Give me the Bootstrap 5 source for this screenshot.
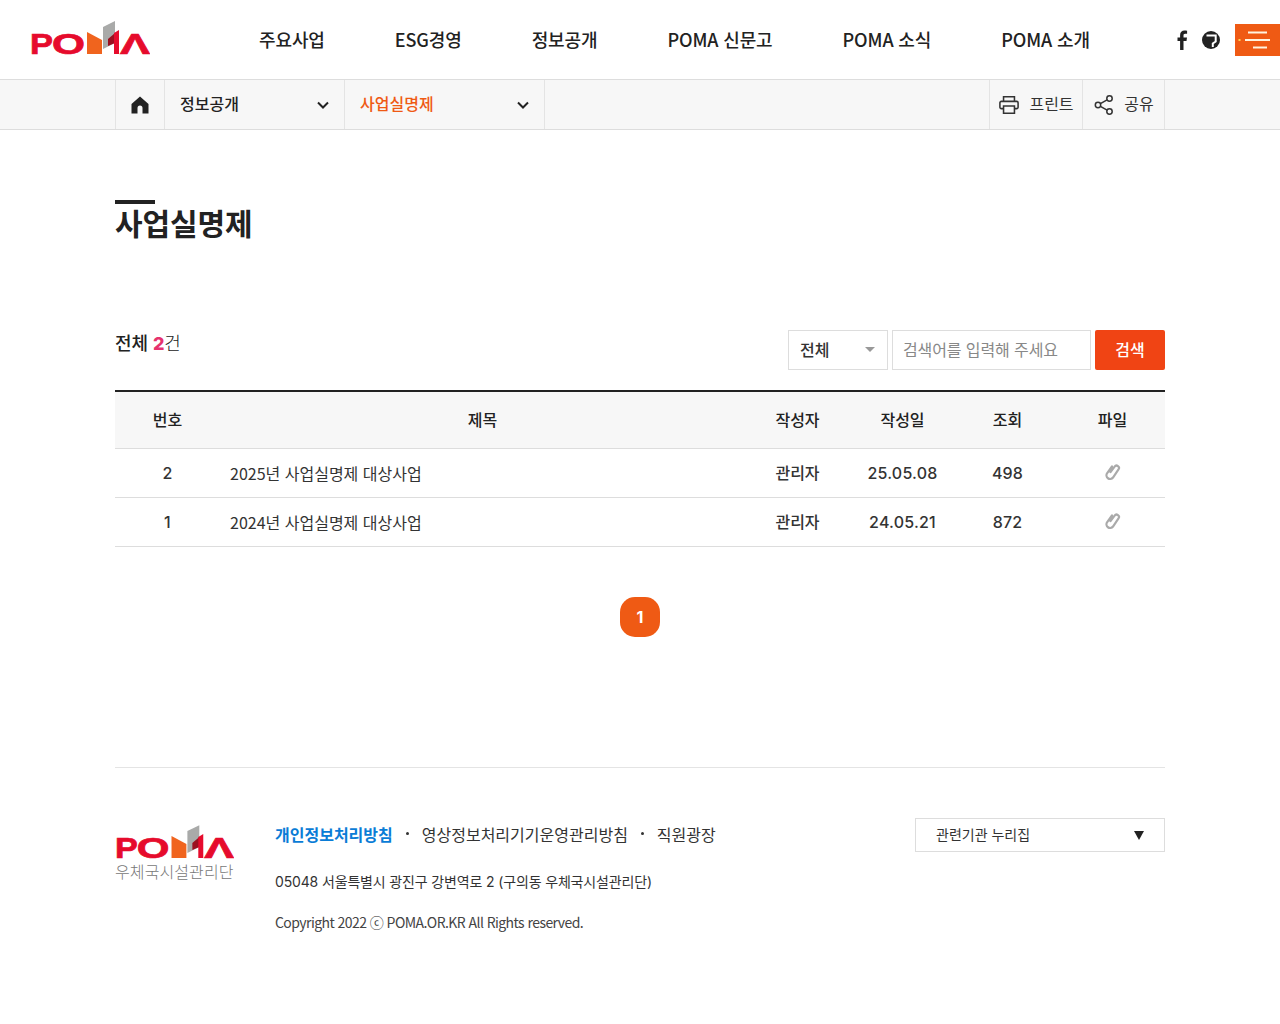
<!DOCTYPE html>
<html lang="ko">
<head>
    <meta charset="UTF-8">
    <meta name="viewport" content="width=device-width, initial-scale=1.0">
    <title>사업실명제</title>
    <link rel="stylesheet" href="https://cdn.jsdelivr.net/npm/bootstrap@5.3.0/dist/css/bootstrap.min.css">
    <style>
        body {
            font-family: "Noto Sans CJK KR", "Noto Sans", sans-serif;
            color: #222;
            background: #fff;
        }

        .wrap-1050 { width: 1050px; margin: 0 auto; }

        /* header */
        .site-head { height: 80px; border-bottom: 1px solid #ddd; padding-left: 30px; }
        .logo-top { width: 120px; height: 40px; margin-top: 3px; }
        .logo-top text, .foot-logo text { font-family: "Liberation Sans", sans-serif; font-weight: 700; }
        .gnb { margin-left: 109px; gap: 70px; font-size: 18px; font-weight: 500; letter-spacing: -0.12px; }
        .gnb a { color: #222; text-decoration: none; }
        .head-icons { margin-left: auto; gap: 11px; }
        .menu-btn { width: 45px; height: 32px; background: #ef5a14; margin-left: 4px; }

        /* location bar */
        .loc-bar { height: 50px; background: #f7f7f7; border-bottom: 1px solid #ddd; }
        .loc-cell { height: 49px; border-right: 1px solid #e4e4e4; font-size: 16px; font-weight: 500; }
        .loc-cell span { margin-top: -3px; }
        .loc-home { width: 50px; border-left: 1px solid #e4e4e4; }
        .loc-sel { padding: 0 14px 0 15px; justify-content: space-between; }
        .loc-one { width: 180px; }
        .loc-two { width: 200px; color: #ef5a14; }
        .loc-tool { gap: 10px; font-weight: 400; color: #333; }
        .loc-print { width: 94px; border-left: 1px solid #e4e4e4; justify-content: center; padding-left: 1px; }
        .loc-share { width: 82px; justify-content: center; padding-left: 1px; }

        /* title */
        .page-title { margin-top: 70px; height: 130px; }
        .title-bar { width: 40px; height: 4px; background: #222; }
        .page-title h2 { font-size: 30px; font-weight: 700; line-height: 36px; margin: 0; color: #222; letter-spacing: -0.1px; }

        /* board top */
        .board-top { height: 60px; }
        .count-txt { font-size: 18px; font-weight: 500; line-height: 26px; margin-top: -1px; letter-spacing: -0.1px; }
        .count-txt b { color: #e6326e; font-weight: 800; font-family: Inter, sans-serif; }
        .count-txt span { font-weight: 300; }
        .sch-select { width: 100px; height: 40px; border-radius: 0; border: 1px solid #ddd; font-size: 16px; font-weight: 500; color: #333; padding: 0 11px 2px; display: flex; align-items: center; justify-content: space-between; }
        .tri-gray { width: 0; height: 0; border: 5px solid transparent; border-top: 5px solid #999; border-bottom: 0; margin-right: 1px; }
        .sch-input.form-control { width: 199px; height: 40px; margin-left: 4px; border-radius: 0; border: 1px solid #ddd; font-size: 16px; padding: 0 10px 2px; font-family: inherit; letter-spacing: -0.1px; }
        .sch-input::placeholder { color: #888; opacity: 1; }
        .sch-btn.btn { width: 70px; height: 40px; margin-left: 4px; padding: 0 0 2px; background: #f04414; border: 0; border-radius: 2px; color: #fff; font-size: 16px; font-weight: 500; }

        /* board */
        .board.table { margin: 0; border-top: 2px solid #222; table-layout: fixed; font-size: 16px; }
        .board th { background: #f7f7f7; height: 57px; padding: 0 0 2px; text-align: center; vertical-align: middle; font-weight: 500; font-size: 16px; color: #222; border-bottom: 1px solid #ddd; }
        .board td { height: 49px; padding: 1px 0 0; text-align: center; vertical-align: middle; color: #333; border-bottom: 1px solid #ddd; font-family: Inter, "Noto Sans CJK KR", sans-serif; font-weight: 500; letter-spacing: 0.2px; }
        .board td.subj { text-align: left; padding: 0 0 0 10px; font-weight: 400; font-size: 16px; letter-spacing: 0; font-family: "Noto Sans CJK KR", sans-serif; }
        .board td.who { font-family: "Noto Sans CJK KR", sans-serif; padding: 0 0 2px; letter-spacing: 0; }
        .board td.clip-cell { padding: 0 0 5px; }

        /* paging */
        .paging { margin-top: 50px; height: 40px; }
        .page-one { width: 40px; height: 40px; border-radius: 15px; background: #ef5a14; color: #fff; font-weight: 700; font-size: 16px; font-family: Inter, sans-serif; }

        /* footer */
        .foot { margin-top: 130px; border-top: 1px solid #e4e4e4; padding-top: 50px; }
        .foot-logo { width: 160px; flex: none; padding-top: 7px; }
        .foot-logo svg { display: block; margin-bottom: -4px; }
        .foot-name { width: 119px; font-size: 16px; line-height: 20px; color: #777; white-space: nowrap; font-weight: 300; letter-spacing: 0.1px; }
        .foot-links { font-size: 16px; gap: 13px; line-height: 32px; color: #333; }
        .foot-links .priv { color: #0a7cd6; font-weight: 700; }
        .foot-links i { width: 3px; height: 3px; border-radius: 50%; background: #333; display: block; }
        .foot-addr { font-size: 14px; color: #333; line-height: 20px; margin-top: 22px; font-family: Inter, "Noto Sans CJK KR", sans-serif; letter-spacing: -0.15px; }
        .foot-copy { font-size: 14px; color: #444; line-height: 20px; margin-top: 20px; letter-spacing: -0.56px; }
        .family-sel { width: 250px; height: 34px; border: 1px solid #ddd; font-size: 14px; padding: 0 20px; display: flex; justify-content: space-between; align-items: center; color: #333; margin-left: auto; }
        .tri-dark { width: 0; height: 0; border: 5px solid transparent; border-top: 9px solid #222; border-bottom: 0; margin-top: 2px; }
        .page-end { height: 70px; }
    </style>
</head>
<body>
    <header class="site-head d-flex align-items-center">
        <svg class="logo-top" viewBox="0 0 120 40">
            <g fill="#e60b2c" stroke="#e60b2c" stroke-width=".7">
                <text x="0" y="33" font-size="30" textLength="23" lengthAdjust="spacingAndGlyphs">P</text>
                <text x="22" y="33" font-size="30" textLength="33" lengthAdjust="spacingAndGlyphs">O</text>
                <text x="90" y="33" font-size="30" textLength="30" lengthAdjust="spacingAndGlyphs">Λ</text>
            </g>
            <path d="M57 33V11L72 19V33Z" fill="#f0641e"/>
            <path d="M73 28V6L85 0V22Z" fill="#a9aaa9"/>
            <path d="M78 18L85 12V22L78 25Z" fill="#9b1020"/>
            <path d="M84 12L89 9V33H84Z" fill="#e60b2c"/>
        </svg>
        <nav class="gnb d-flex">
            <a href="#">주요사업</a>
            <a href="#">ESG경영</a>
            <a href="#">정보공개</a>
            <a href="#">POMA 신문고</a>
            <a href="#">POMA 소식</a>
            <a href="#">POMA 소개</a>
        </nav>
        <div class="head-icons d-flex align-items-center">
            <svg width="18" height="20" viewBox="0 0 18 20"><path d="M10.500 20V11h3l.5-3.400h-3.500V5.500c0-1 .3-1.700 1.700-1.700h1.900V.7C13.700.6 12.700.5 11.500.5 8.900.5 7.100 2 7.100 5v2.600H4.500V11h2.600v9z" fill="#222"/></svg>
            <svg width="18" height="18" viewBox="0 0 18 18"><circle cx="9" cy="9" r="9" fill="#222"/><path d="M4.500 4.500H13.700V10.500L10.800 12.500V16" fill="none" stroke="#fff" stroke-width="2"/></svg>
            <div class="menu-btn">
                <svg class="d-block" width="45" height="32" viewBox="0 0 45 32"><g fill="#fff4e0"><rect x="13" y="7.500" width="19" height="2"/><rect x="10" y="15" width="25" height="2"/><rect x="18" y="22.500" width="14" height="2"/><rect x="3.500" y="15" width="2" height="2" fill="#ffd34d"/></g></svg>
            </div>
        </div>
    </header>

    <div class="loc-bar">
        <div class="wrap-1050 d-flex">
            <div class="loc-cell loc-home d-flex align-items-center justify-content-center">
                <svg width="20" height="20" viewBox="0 0 20 20"><path d="M10 1.500 1.500 9v9.500h6V13a2.500 2.500 0 0 1 5 0v5.500h6V9z" fill="#222"/></svg>
            </div>
            <div class="loc-cell loc-sel loc-one d-flex align-items-center">
                <span>정보공개</span>
                <svg width="14" height="10" viewBox="0 0 14 10"><path d="M2 2.500 7 7.500 12 2.500" fill="none" stroke="#222" stroke-width="2"/></svg>
            </div>
            <div class="loc-cell loc-sel loc-two d-flex align-items-center">
                <span>사업실명제</span>
                <svg width="14" height="10" viewBox="0 0 14 10"><path d="M2 2.500 7 7.500 12 2.500" fill="none" stroke="#222" stroke-width="2"/></svg>
            </div>
            <div class="loc-cell loc-tool loc-print d-flex align-items-center ms-auto">
                <svg width="20" height="20" viewBox="0 0 22 20" fill="none" stroke="#333" stroke-width="1.700"><path d="M5 6V1h12v5M5 14H2.500A1.500 1.500 0 0 1 1 12.500v-5A1.500 1.500 0 0 1 2.500 6h17A1.500 1.500 0 0 1 21 7.500v5a1.500 1.500 0 0 1-1.500 1.500H17"/><path d="M5 11h12v8H5z"/></svg>
                <span>프린트</span>
            </div>
            <div class="loc-cell loc-tool loc-share d-flex align-items-center">
                <svg width="20" height="20" viewBox="0 0 20 20" fill="none" stroke="#333" stroke-width="1.500"><circle cx="4" cy="10" r="2.700"/><circle cx="15.500" cy="3.500" r="2.700"/><circle cx="15.500" cy="16.500" r="2.700"/><path d="M6.400 8.700 13.100 4.800M6.400 11.300 13.100 15.200"/></svg>
                <span>공유</span>
            </div>
        </div>
    </div>

    <main class="wrap-1050">
        <div class="page-title">
            <div class="title-bar"></div>
            <h2>사업실명제</h2>
        </div>

        <div class="board-top d-flex justify-content-between">
            <div class="count-txt">전체 <b>2</b><span>건</span></div>
            <form class="d-flex">
                <div class="sch-select"><span>전체</span><i class="tri-gray"></i></div>
                <input class="sch-input form-control" type="text" placeholder="검색어를 입력해 주세요">
                <button class="sch-btn btn" type="button">검색</button>
            </form>
        </div>

        <table class="board table">
            <colgroup>
                <col style="width:10%"><col style="width:50%"><col style="width:10%"><col style="width:10%"><col style="width:10%"><col style="width:10%">
            </colgroup>
            <thead>
                <tr><th>번호</th><th>제목</th><th>작성자</th><th>작성일</th><th>조회</th><th>파일</th></tr>
            </thead>
            <tbody id="board-rows"></tbody>
        </table>

        <div class="paging d-flex justify-content-center">
            <div class="page-one d-flex align-items-center justify-content-center">1</div>
        </div>

        <footer class="foot d-flex">
            <div class="foot-logo">
                <svg width="119" height="40" viewBox="0 0 120 40">
                    <g fill="#e60b2c" stroke="#e60b2c" stroke-width=".7">
                        <text x="0" y="33" font-size="30" textLength="23" lengthAdjust="spacingAndGlyphs">P</text>
                        <text x="22" y="33" font-size="30" textLength="33" lengthAdjust="spacingAndGlyphs">O</text>
                        <text x="90" y="33" font-size="30" textLength="30" lengthAdjust="spacingAndGlyphs">Λ</text>
                    </g>
                    <path d="M57 33V11L72 19V33Z" fill="#f0641e"/>
                    <path d="M73 28V6L85 0V22Z" fill="#a9aaa9"/>
                    <path d="M78 18L85 12V22L78 25Z" fill="#9b1020"/>
                    <path d="M84 12L89 9V33H84Z" fill="#e60b2c"/>
                </svg>
                <div class="foot-name">우체국시설관리단</div>
            </div>
            <div>
                <div class="foot-links d-flex align-items-center">
                    <span class="priv">개인정보처리방침</span><i></i>
                    <span>영상정보처리기기운영관리방침</span><i></i>
                    <span>직원광장</span>
                </div>
                <div class="foot-addr">05048 서울특별시 광진구 강변역로 2 (구의동 우체국시설관리단)</div>
                <div class="foot-copy">Copyright 2022 ⓒ POMA.OR.KR All Rights reserved.</div>
            </div>
            <div class="family-sel"><span>관련기관 누리집</span><i class="tri-dark"></i></div>
        </footer>
    </main>
    <div class="page-end"></div>

    <script>
        const rows = [
            { no: 2, title: "2025년 사업실명제 대상사업", date: "25.05.08", views: 498 },
            { no: 1, title: "2024년 사업실명제 대상사업", date: "24.05.21", views: 872 }
        ];
        const clip = `<svg width="16" height="18" viewBox="0 0 16 18" fill="none" stroke="#aaa" stroke-width="2.200" stroke-linecap="round"><path d="M5.500 9 9.600 3.600a2.400 2.400 0 0 1 3.900 2.800L8 14.500a3.600 3.600 0 0 1-5.800-4.300L7 3.500"/></svg>`;
        document.getElementById('board-rows').innerHTML = rows.map(r => `
            <tr>
                <td>${r.no}</td>
                <td class="subj">${r.title}</td>
                <td class="who">관리자</td>
                <td>${r.date}</td>
                <td>${r.views}</td>
                <td class="clip-cell">${clip}</td>
            </tr>`).join('');
    </script>
    <script src="https://cdn.jsdelivr.net/npm/bootstrap@5.3.0/dist/js/bootstrap.bundle.min.js"></script>
</body>
</html>
